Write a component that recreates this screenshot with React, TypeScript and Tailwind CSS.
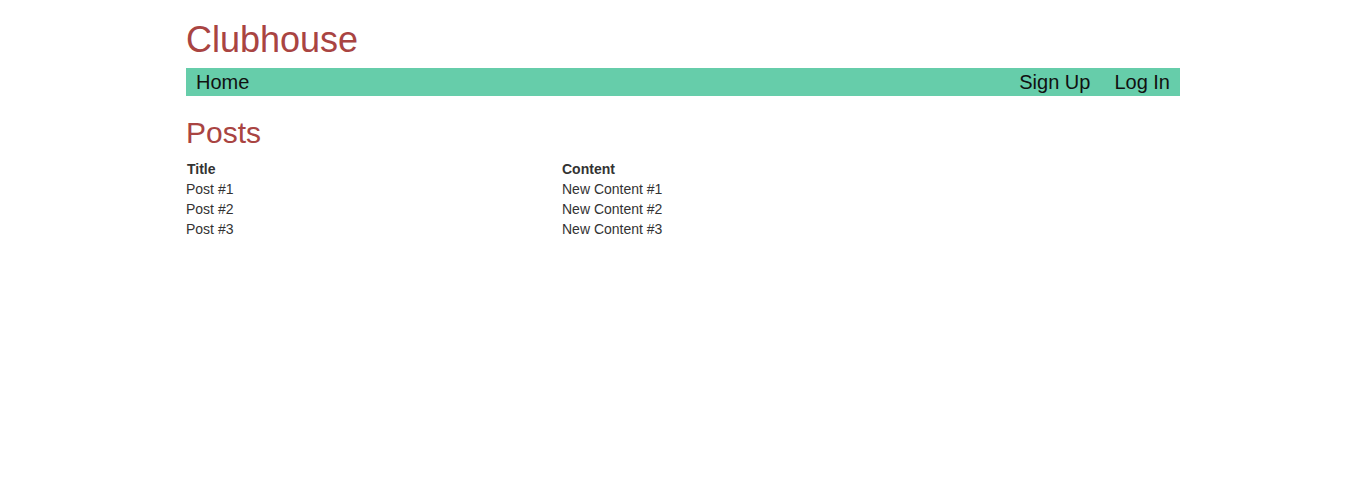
import { Fragment } from "react";

const posts = [
  { title: "Post #1", content: "New Content #1" },
  { title: "Post #2", content: "New Content #2" },
  { title: "Post #3", content: "New Content #3" },
];

const App = () => {
  return (
    <div className="w-[994px] mx-auto font-['Liberation_Sans',Arial,sans-serif] text-[14px] leading-[20px] text-[#333]">
      <h1 className="mt-[20px] mb-[8px] text-[36px] leading-[1.1] text-[#a94442]">Clubhouse</h1>
      <nav className="h-[28px] bg-[#66cdaa] px-[10px] flex items-center justify-between text-[20px] text-[#111]">
        <a>Home</a>
        <div className="flex gap-[24px]">
          <a>Sign Up</a>
          <a>Log In</a>
        </div>
      </nav>
      <h2 className="mt-[20px] mb-[10px] text-[30px] leading-[1.1] text-[#a94442]">Posts</h2>
      <div className="grid grid-cols-[376px_1fr]">
        <div className="font-bold pl-px">Title</div>
        <div className="font-bold">Content</div>
        {posts.map((p) => (
          <Fragment key={p.title}>
            <div>{p.title}</div>
            <div>{p.content}</div>
          </Fragment>
        ))}
      </div>
    </div>
  );
};

export default App;
